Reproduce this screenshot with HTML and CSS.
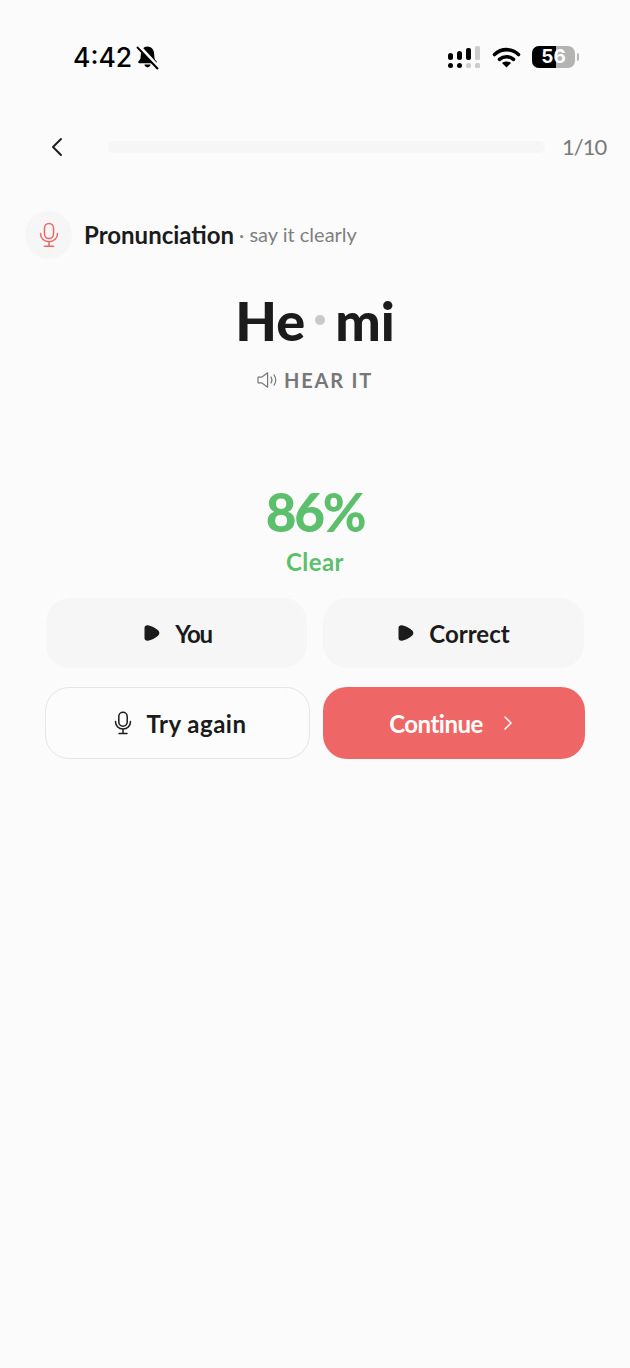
FILE: index.html
```html
<!DOCTYPE html>
<html lang="en">

<head>
    <meta charset="UTF-8">
    <meta name="viewport" content="width=device-width, initial-scale=1.0">
    <title>Pronunciation</title>
    <link rel="stylesheet" href="styles.css">
</head>

<body>
    <div class="status-bar">
        <div class="status-left">
            <span class="clock">4:42</span>
            <svg class="bell" width="25" height="25" viewBox="0 0 24 24">
                <path d="M12 1.500c-3.800 0-6 2.900-6.300 6.400l-.4 4.500c-.1 1-1 2.100-2 3.300-.6.800-.2 1.800.9 1.800h15.600c1.100 0 1.500-1 .9-1.800-1-1.200-1.900-2.300-2-3.300l-.4-4.500C18 4.400 15.800 1.500 12 1.500z" fill="#000"/>
                <path d="M9 18.800c.4 1.600 1.600 2.700 3 2.700s2.600-1.100 3-2.700z" fill="#000"/>
                <path d="M4 1l19 20.500" stroke="#fbfbfb" stroke-width="3"/>
                <path d="M2.500 2.500l19 20" stroke="#000" stroke-width="2" stroke-linecap="round"/>
            </svg>
        </div>
        <div class="status-right">
            <svg width="34" height="22" viewBox="0 0 34 22">
                <rect x="1" y="7" width="5" height="7" rx="2.500" fill="#000"/>
                <rect x="10" y="5" width="5" height="9" rx="2.500" fill="#000"/>
                <rect x="19" y="2" width="5" height="12" rx="2" fill="#000"/>
                <rect x="28" y="0" width="5" height="14" rx="1.500" fill="#ccc"/>
                <rect x="1" y="17" width="5" height="5" rx="2.500" fill="#000"/>
                <rect x="10" y="17" width="5" height="5" rx="2.500" fill="#000"/>
                <rect x="19" y="17" width="5" height="5" rx="2" fill="#ccc"/>
                <rect x="28" y="17" width="5" height="5" rx="1.500" fill="#ccc"/>
            </svg>
            <svg width="29" height="21" viewBox="0 0 29 21">
                <path d="M2.500 7.500C9.500 1 19.500 1 26.500 7.500" fill="none" stroke="#000" stroke-width="3.600" stroke-linecap="round"/>
                <path d="M7.500 12.300c4-3.500 10-3.500 14 0" fill="none" stroke="#000" stroke-width="3.600" stroke-linecap="round"/>
                <path d="M14.500 20.500l-4.500-4.600c2.600-2 6.400-2 9 0z" fill="#000"/>
            </svg>
            <div class="battery">
                <div class="battery-body"><span class="battery-fill"></span><span class="battery-level">56</span></div>
                <span class="battery-cap"></span>
            </div>
        </div>
    </div>

    <div class="top-bar">
        <button class="back-btn">
            <svg width="14" height="20" viewBox="0 0 14 20">
                <path d="M11 2L3 10l8 8" fill="none" stroke="#1b1b1b" stroke-width="1.900" stroke-linecap="round" stroke-linejoin="round"/>
            </svg>
        </button>
        <div class="progress-track"></div>
        <span class="progress-count">1/10</span>
    </div>

    <div class="prompt">
        <div class="prompt-icon">
            <svg width="22" height="26" viewBox="0 0 22 26">
                <rect x="6.500" y="1.500" width="9" height="15" rx="4.500" fill="none" stroke="#ee6666" stroke-width="1.500"/>
                <path d="M2.500 11.500c0 5 3.800 8.300 8.500 8.300s8.500-3.300 8.500-8.300M11 20v4M6.500 24.300h9" fill="none" stroke="#ee6666" stroke-width="1.500" stroke-linecap="round"/>
            </svg>
        </div>
        <span class="prompt-title">Pronunciation</span>
        <span class="prompt-hint">· say it clearly</span>
    </div>

    <div class="word">
        <span>He</span><span class="syllable-dot"></span><span>mi</span>
    </div>

    <div class="hear-it">
        <svg width="22" height="18" viewBox="0 0 22 18">
            <path d="M1 6.200v5.600h3.600l6 4.400V1.800l-6 4.400z" fill="none" stroke="#777" stroke-width="1.200" stroke-linejoin="round"/>
            <path d="M14 6c1.100 1.800 1.100 4.200 0 6M17 3.800c2 3 2 7.400 0 10.400" fill="none" stroke="#777" stroke-width="1.200" stroke-linecap="round"/>
        </svg>
        <span>HEAR IT</span>
    </div>

    <div class="score">86%</div>
    <div class="score-label">Clear</div>

    <div class="actions">
        <div class="action-row">
            <button class="btn btn-play">
                <svg class="play" width="16" height="16" viewBox="0 0 16 16">
                    <path d="M.5 3C.5 1 2 0 4 .3c3.500.5 7 2.500 10 5 1.800 1.500 1.800 3.900 0 5.400-3 2.500-6.500 4.500-10 5C2 16 .5 15 .5 13z" fill="#1b1b1b"/>
                </svg>
                <span class="label-you">You</span>
            </button>
            <button class="btn btn-play">
                <svg class="play" width="16" height="16" viewBox="0 0 16 16">
                    <path d="M.5 3C.5 1 2 0 4 .3c3.500.5 7 2.500 10 5 1.800 1.500 1.800 3.900 0 5.400-3 2.500-6.500 4.500-10 5C2 16 .5 15 .5 13z" fill="#1b1b1b"/>
                </svg>
                <span>Correct</span>
            </button>
        </div>
        <div class="action-row action-row-main">
            <button class="btn btn-outline">
                <svg width="20" height="24" viewBox="0 0 20 24">
                    <rect x="5.800" y="1.200" width="8.400" height="14" rx="4.200" fill="none" stroke="#1b1b1b" stroke-width="1.500"/>
                    <path d="M2.500 10.500c0 4.700 3.300 7.600 7.500 7.600s7.500-2.900 7.500-7.600M10 18.200v3.800M6 22.500h8" fill="none" stroke="#1b1b1b" stroke-width="1.500" stroke-linecap="round"/>
                </svg>
                <span class="label-retry">Try again</span>
            </button>
            <button class="btn btn-primary">
                <span class="label-continue">Continue</span>
                <svg width="12" height="16" viewBox="0 0 12 16">
                    <path d="M3 2l6 6-6 6" fill="none" stroke="#fff" stroke-width="1.500" stroke-linecap="round" stroke-linejoin="round"/>
                </svg>
            </button>
        </div>
    </div>
</body>

</html>
```

FILE: styles.css
```css
html, body {
    margin: 0;
    padding: 0;
    height: 100%;
}

body {
    background-color: #fbfbfb;
    color: #1b1b1b;
    font-family: Lato, "Noto Sans", sans-serif;
    overflow: hidden;
}

button {
    font-family: inherit;
    border: none;
    background: none;
    padding: 0;
}

.status-bar {
    height: 116px;
    box-sizing: border-box;
    padding: 39px 51px 0 73px;
    display: flex;
    justify-content: space-between;
    align-items: flex-start;
}

.status-left {
    display: flex;
    align-items: center;
    gap: 3px;
}

.clock {
    font-family: Inter, sans-serif;
    font-size: 26.500px;
    font-weight: 500;
    line-height: 36px;
    color: #000;
}

.status-right {
    display: flex;
    align-items: center;
    gap: 11px;
    height: 36px;
}

.battery {
    display: flex;
    align-items: center;
    gap: 2px;
}

.battery-body {
    position: relative;
    width: 43px;
    height: 22px;
    border-radius: 7px;
    background-color: #b4b4b4;
    overflow: hidden;
}

.battery-fill {
    position: absolute;
    top: 0;
    left: 0;
    bottom: 0;
    width: 24px;
    background-color: #000;
}

.battery-level {
    position: absolute;
    top: 0;
    left: 0;
    right: 0;
    text-align: center;
    font-family: Inter, sans-serif;
    font-size: 19px;
    font-weight: 700;
    line-height: 22px;
    color: #fff;
}

.battery-cap {
    width: 2px;
    height: 8px;
    border-radius: 0 2px 2px 0;
    background-color: #b4b4b4;
}

.top-bar {
    height: 62px;
    display: flex;
    align-items: center;
    padding-left: 50px;
}

.back-btn {
    width: 14px;
    height: 20px;
    margin-right: 44px;
}

.progress-track {
    width: 437px;
    height: 12px;
    border-radius: 6px;
    background-color: #f6f6f6;
}

.progress-count {
    margin-left: 17px;
    font-size: 22px;
    letter-spacing: -1px;
    color: #7a7a7a;
    line-height: 24px;
}

.prompt {
    margin-top: 33px;
    padding-left: 25px;
    display: flex;
    align-items: center;
    height: 48px;
}

.prompt-icon {
    width: 47px;
    height: 48px;
    border-radius: 50%;
    background-color: #f6f6f6;
    display: flex;
    align-items: center;
    justify-content: center;
    margin-right: 12px;
}

.prompt-title {
    margin-top: -2px;
    font-size: 24px;
    font-weight: 700;
}

.prompt-hint {
    margin-top: -2px;
    margin-left: 5px;
    font-size: 20px;
    color: #7f7f7f;
}

.word {
    margin-top: 29px;
    display: flex;
    justify-content: center;
    align-items: center;
    gap: 10px;
    font-size: 54px;
    font-weight: 900;
    line-height: 66px;
}

.syllable-dot {
    width: 10px;
    height: 10px;
    margin-top: -3px;
    border-radius: 50%;
    background-color: #c9c9c9;
}

.hear-it {
    margin-top: 12px;
    display: flex;
    justify-content: center;
    align-items: center;
    gap: 5px;
    height: 28px;
    font-size: 20px;
    font-weight: 700;
    letter-spacing: 1.800px;
    color: #777;
}

.score {
    margin-top: 86px;
    text-align: center;
    font-size: 53px;
    font-weight: 900;
    letter-spacing: -2.300px;
    line-height: 64px;
    color: #5cbf6b;
}

.score-label {
    margin-top: 2px;
    text-align: center;
    font-size: 24px;
    font-weight: 700;
    letter-spacing: .4px;
    line-height: 32px;
    color: #5cbf6b;
}

.actions {
    margin-top: 20px;
    display: flex;
    flex-direction: column;
    gap: 19px;
    padding-left: 46px;
    padding-right: 46px;
}

.action-row {
    display: grid;
    grid-template-columns: 1fr 1fr;
    gap: 16px;
}

.action-row-main {
    grid-template-columns: 265px 1fr;
    gap: 13px;
    margin-left: -1px;
    margin-right: -1px;
}

.btn {
    display: flex;
    align-items: center;
    justify-content: center;
    gap: 15px;
    height: 70px;
    box-sizing: border-box;
    border-radius: 24px;
    font-size: 24px;
    font-weight: 700;
    color: #1b1b1b;
}

.btn-play {
    background-color: #f6f6f6;
    padding-left: 1px;
}

.label-you {
    letter-spacing: -1.300px;
    margin-right: -2px;
}

.btn-outline {
    height: 72px;
    padding-left: 4px;
    background-color: #fcfcfc;
    border: 1.500px solid #e6e6e6;
    gap: 14px;
}

.label-retry {
    letter-spacing: .5px;
}

.btn-primary {
    height: 72px;
    padding-right: 5px;
    background-color: #ee6666;
    color: #fff;
    gap: 19px;
}

.label-continue {
    letter-spacing: -.5px;
}
```
